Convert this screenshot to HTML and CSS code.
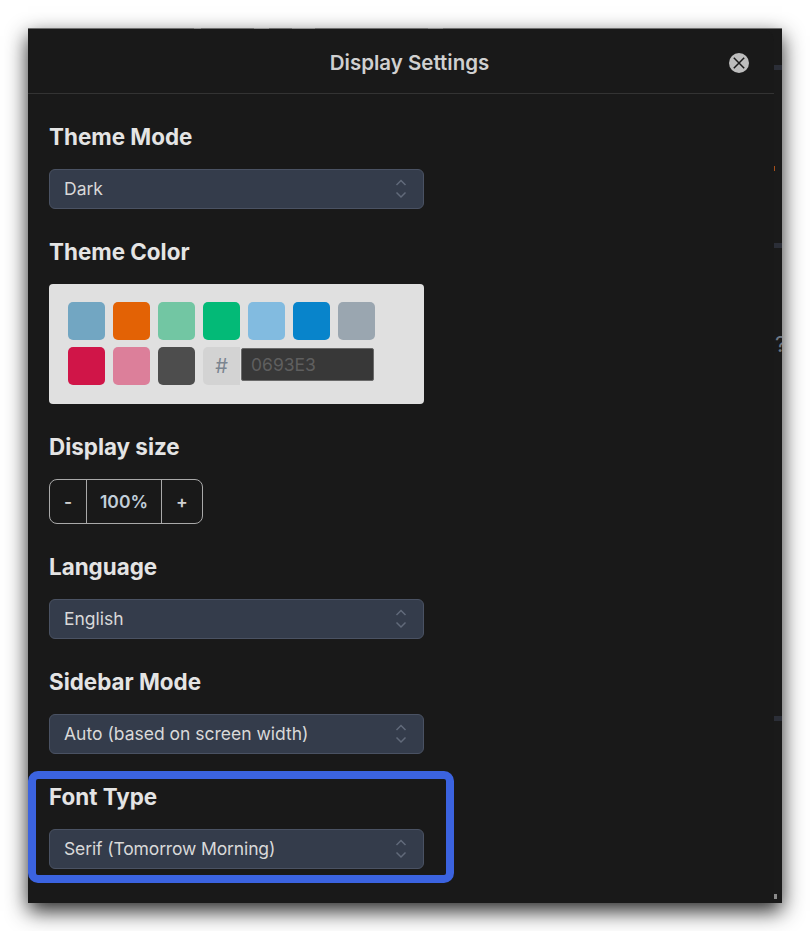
FILE: index.html
```html
<!DOCTYPE html>
<html lang="en">
<head>
<meta charset="utf-8">
<title>Display Settings</title>
<link rel="stylesheet" href="styles.css">
</head>
<body>
<div class="window">
  <div class="top-specks"></div>
  <div class="window-body">
    <main class="modal">
      <header class="modal-head">
        <h1 class="modal-title">Display Settings</h1>
        <button class="close" aria-label="Close">
          <svg viewBox="0 0 20 20" width="20" height="20"><circle cx="10" cy="10" r="10" fill="#bdbdbd"/><path d="M4.8 4.8 15.2 15.2M15.2 4.8 4.8 15.2" stroke="#1a1a1a" stroke-width="1.5" fill="none"/></svg>
        </button>
      </header>
      <div class="modal-body">
        <section class="field">
          <h2 class="label">Theme Mode</h2>
          <div class="select"><span>Dark</span>
            <svg class="chev" viewBox="0 0 12 20" width="12" height="20"><path d="M1.5 6 6 1.5 10.5 6M1.5 13.5 6 18 10.5 13.5" fill="none" stroke="#616a7a" stroke-width="1.5"/></svg>
          </div>
        </section>
        <section class="field">
          <h2 class="label">Theme Color</h2>
          <div class="colors">
            <div class="swatch c1"></div><div class="swatch c2"></div><div class="swatch c3"></div><div class="swatch c4"></div><div class="swatch c5"></div><div class="swatch c6"></div><div class="swatch c7"></div>
            <div class="swatch c8"></div><div class="swatch c9"></div><div class="swatch c10"></div>
            <div class="hex"><span class="hash">#</span><span class="hex-input">0693E3</span></div>
          </div>
        </section>
        <section class="field">
          <h2 class="label">Display size</h2>
          <div class="stepper">
            <span class="step minus">-</span><span class="step value">100%</span><span class="step plus">+</span>
          </div>
        </section>
        <section class="field">
          <h2 class="label">Language</h2>
          <div class="select"><span>English</span>
            <svg class="chev" viewBox="0 0 12 20" width="12" height="20"><path d="M1.5 6 6 1.5 10.5 6M1.5 13.5 6 18 10.5 13.5" fill="none" stroke="#616a7a" stroke-width="1.5"/></svg>
          </div>
        </section>
        <section class="field">
          <h2 class="label">Sidebar Mode</h2>
          <div class="select"><span>Auto (based on screen width)</span>
            <svg class="chev" viewBox="0 0 12 20" width="12" height="20"><path d="M1.5 6 6 1.5 10.5 6M1.5 13.5 6 18 10.5 13.5" fill="none" stroke="#616a7a" stroke-width="1.5"/></svg>
          </div>
        </section>
        <section class="field highlighted">
          <h2 class="label">Font Type</h2>
          <div class="select"><span class="tight">Serif (Tomorrow Morning)</span>
            <svg class="chev" viewBox="0 0 12 20" width="12" height="20"><path d="M1.5 6 6 1.5 10.5 6M1.5 13.5 6 18 10.5 13.5" fill="none" stroke="#616a7a" stroke-width="1.5"/></svg>
          </div>
        </section>
      </div>
    </main>
    <aside class="behind">
      <i class="bit b1"></i><i class="bit b2"></i><i class="bit b3"></i><span class="qmark">?</span><i class="bit b4"></i><i class="bit b5"></i>
    </aside>
  </div>
</div>
</body>
</html>
```
FILE: styles.css
```css
* { box-sizing: border-box; }
html, body { margin: 0; background: #fff; }
body { height: 931px; overflow: hidden; font-family: Inter, "Liberation Sans", sans-serif; padding: 28px; }
.window { width: 754px; height: 875px; background: #1a1a1a; box-shadow: 0 8px 20px rgba(0,0,0,.85); display: flex; flex-direction: column; }
.top-specks { height: 1px; flex: none; background: linear-gradient(90deg, #6e6e6e 0 22%, #8f8f8f 22% 23%, #6e6e6e 23% 30%, #949494 30% 32%, #6e6e6e 32% 35%, #8f8f8f 35% 38%, #6e6e6e 38% 53%, #8a8a8a 53% 55%, #6e6e6e 55% 100%); }
.window-body { flex: 1; display: flex; min-height: 0; }
.modal { width: 746px; background: #191919; border-top-right-radius: 12px; }
.modal-head { height: 65px; border-bottom: 1px solid #333; display: flex; align-items: center; justify-content: center; position: relative; padding: 4px 0 0 17px; }
.modal-title { margin: 0; font-size: 20.5px; font-weight: 600; color: #d0d0d0; line-height: 1; }
.close { position: absolute; right: 25px; top: 24px; padding: 0; border: 0; background: none; width: 20px; height: 20px; display: block; }
.close svg { display: block; }
.modal-body { padding: 27px 0 0 21px; display: flex; flex-direction: column; gap: 27px; }
.field { width: 375px; display: flex; flex-direction: column; gap: 16px; position: relative; }
.label { margin: 0; font-size: 22.4px; line-height: 32px; height: 32px; font-weight: 700; color: #e4e4e4; }
.select { height: 40px; background: #343c4b; border: 1px solid #4a5263; border-radius: 6px; color: #d9d9d9; font-size: 17.5px; display: flex; align-items: center; justify-content: space-between; padding: 0 16px 2px 14px; }
.tight { letter-spacing: -0.13px; }
.chev { display: block; margin-top: 2px; }
.colors { height: 120px; background: #e0e0e0; border-radius: 4px; padding: 18px 19px; display: grid; grid-template-columns: repeat(7, 37px); grid-auto-rows: 38px; column-gap: 8px; row-gap: 7px; }
.swatch { border-radius: 5px; }
.c1 { background: #72a6c2; } .c2 { background: #e36205; } .c3 { background: #72c6a3; } .c4 { background: #03ba77; } .c5 { background: #82bbe0; } .c6 { background: #0884cb; } .c7 { background: #9aa6b0; }
.c8 { background: #d01548; } .c9 { background: #dc7f9a; } .c10 { background: #4d4d4d; }
.hex { grid-column: span 4; display: flex; align-items: flex-start; height: 38px; width: 172px; }
.hash { width: 37px; height: 38px; background: #d3d3d3; border-radius: 5px 0 0 5px; color: #7b8590; font-size: 20px; display: flex; align-items: center; justify-content: center; }
.hex-input { width: 133px; height: 33px; margin: 1px 0 0 1px; background: #383838; border: 1px solid #6a6a6a; border-radius: 2px; color: #5f5f5f; font-size: 17.5px; line-height: 31px; padding-left: 9px; }
.stepper { width: 154px; height: 45px; border: 1px solid #a9a9a9; border-radius: 8px; display: flex; color: #d0d0d0; font-size: 17.5px; }
.step { display: flex; align-items: center; justify-content: center; font-weight: 600; }
.minus { width: 36px; }
.value { width: 76px; border-left: 1px solid #a9a9a9; border-right: 1px solid #a9a9a9; color: #c2cfda; }
.plus { width: 40px; }
.highlighted::after { content: ""; position: absolute; left: -21px; right: -30px; top: -10px; bottom: -14px; border: 8px solid #3b63e0; border-radius: 10px; pointer-events: none; }
.behind { width: 8px; position: relative; overflow: hidden; }
.bit { position: absolute; left: 0; display: block; }
.b1 { top: 36px; width: 8px; height: 5px; background: #2b2e37; }
.b2 { top: 137px; width: 1px; height: 5px; background: #a8501a; }
.b3 { top: 214px; width: 8px; height: 5px; background: #2b2e37; }
.b4 { top: 687px; width: 8px; height: 5px; background: #2b2e37; }
.b5 { top: 865px; width: 3px; height: 5px; background: #8a8a8a; }
.qmark { position: absolute; left: 1px; top: 302px; font-size: 22px; line-height: 26px; color: #6f7885; }
```
